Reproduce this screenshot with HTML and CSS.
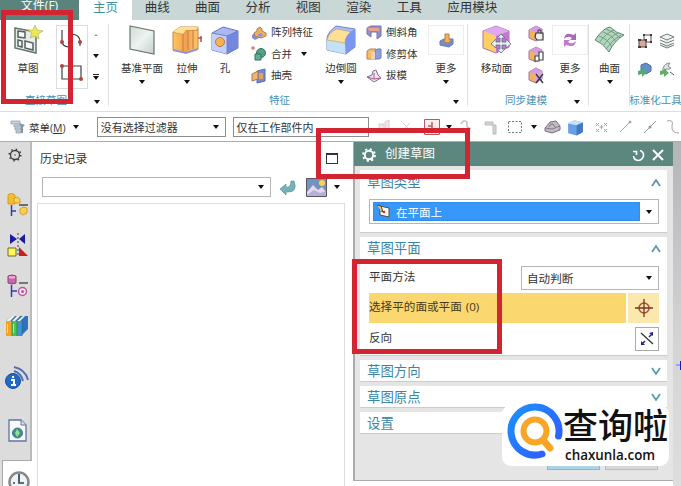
FILE: index.html
```html
<!DOCTYPE html>
<html lang="zh-CN">
<head>
<meta charset="utf-8">
<title>创建草图</title>
<link rel="stylesheet" href="styles.css">
</head>
<body>
<svg class="defs" width="0" height="0">
  <defs>
    <linearGradient id="glass" x1="0" y1="0" x2="1" y2="1"><stop offset="0" stop-color="#cfdad6"/><stop offset=".5" stop-color="#edf3f0"/><stop offset="1" stop-color="#c5d0cc"/></linearGradient>
    <linearGradient id="orange" x1="0" y1="0" x2="1" y2="0"><stop offset="0" stop-color="#fcc65e"/><stop offset=".5" stop-color="#f2a052"/><stop offset="1" stop-color="#fbc66b"/></linearGradient>
    <linearGradient id="logo" x1="0" y1="0" x2="1" y2="1"><stop offset="0" stop-color="#1c92ff"/><stop offset="1" stop-color="#3357ff"/></linearGradient>
    <symbol id="cube" viewBox="0 0 30 30"><path d="M2 8L13 2L28 6V23L17 29L2 25Z" fill="#a9b8f5" stroke="#6675b5"/><path d="M2 8L17 11V29L2 25Z" fill="#c2d1fc"/><path d="M17 11L28 6V23L17 29Z" fill="#7586df"/><path d="M2 8L17 11L28 6M17 11V29" fill="none" stroke="#7280c5"/></symbol>
    <symbol id="face" viewBox="0 0 18 18"><path d="M1 5L8 1L14 4V12L8 16L1 13Z" fill="#efb45d" stroke="#a577a4"/><path d="M1 5L8 1L14 4L8 7Z" fill="#d69ae7"/><path d="M8 7L14 4V12L8 16Z" fill="#d8a2e3"/></symbol>
  </defs>
</svg>
<div class="app">
  <nav class="tabs">
    <span class="tab file">文件(F)</span><span class="tab active">主页</span><span class="tab">曲线</span><span class="tab">曲面</span><span class="tab">分析</span><span class="tab">视图</span><span class="tab">渲染</span><span class="tab">工具</span><span class="tab modules">应用模块</span>
  </nav>

  <section class="ribbon">
    <div class="group sketch">
      <div class="tools">
        <div class="tool w-sketch">
          <svg width="30" height="30" viewBox="0 0 30 30"><path d="M2 3L23 7V28L2 23Z" fill="#e7edea" stroke="#66706c" stroke-width="1.5"/><path d="M5 6L12 7V13L5 12ZM5 15L9 16V22L5 21ZM12 16L20 18V25L12 23Z" fill="#fafafa" stroke="#56605c" stroke-width="1.5"/><path d="M22 0L24 5L30 6L25 9L26 14L22 11L17 13L19 8L15 5L20 5Z" fill="#ece85b" stroke="#b0b74d" stroke-width=".7"/></svg>
          <b>草图</b>
        </div>
        <div class="curves">
          <svg width="30" height="62" viewBox="0 0 30 62"><path d="M5 4V15Q5 21 13 21M13 8Q23 8 23 16V20M5 40H24V53H5Z" fill="none" stroke="#414141" stroke-width="1.2"/><g fill="#b7423d"><circle cx="5" cy="16" r="2"/><circle cx="23" cy="16" r="2"/><circle cx="5" cy="40" r="2"/><circle cx="24" cy="53" r="2"/></g></svg>
        </div>
        <div class="scroll"><i class="caret up"></i><i class="caret"></i><i class="caret bar"></i></div>
      </div>
      <div class="caption">直接草图<i class="caret corner"></i></div>
    </div>

    <div class="group feature">
      <div class="tools">
        <div class="tool w-datum"><svg width="30" height="30" viewBox="0 0 30 30"><path d="M3 1L27 6V29L3 24Z" fill="url(#glass)" stroke="#6a746f" stroke-width="1.2"/></svg><b>基准平面</b><i class="caret"></i></div>
        <div class="tool w-extrude"><svg width="32" height="30" viewBox="0 0 32 30"><path d="M2 7L9 2H27V24L15 28L2 25Z" fill="url(#orange)" stroke="#cc8443"/><path d="M2 7L12 9L15 5L27 5M12 9V27M17 6V25M22 5V24" fill="none" stroke="#c77b3d"/><path d="M2 7L9 2H27L25 5H15L12 9Z" fill="#ffe291"/><path d="M2 25L15 28L27 24" fill="none" stroke="#9098ce" stroke-width="2"/><path d="M27 13H31M30 11V17" stroke="#b85240" stroke-width="1.5"/></svg><b>拉伸</b><i class="caret"></i></div>
        <div class="tool w-hole"><svg width="30" height="30"><use href="#cube"/><circle cx="10" cy="17" r="4.5" fill="#f6b64f" stroke="#cc6f45"/></svg><b>孔</b></div>
        <div class="list w-list1">
          <div><svg width="16" height="16" viewBox="0 0 16 16"><path d="M1 10L5 7L8 9V13L4 15L1 13Z" fill="#7e91df"/><path d="M3 8L6 6V4L9 2L11 4V6L15 8V11L10 13L4 11Z" fill="#efb159" stroke="#b07855"/><path d="M7 9L10 8L12 10L10 12L7 11Z" fill="#8797dc"/></svg>阵列特征</div>
          <div><svg width="16" height="16" viewBox="0 0 16 16"><circle cx="10" cy="7" r="4.500" fill="#52a18a" stroke="#36715f"/><path d="M4 8H10V14H4Z" fill="#5fb194" stroke="#36715f"/><path d="M0 2H4M2 0V4" stroke="#dd5146"/></svg>合并<i class="caret inline"></i></div>
          <div><svg width="16" height="16" viewBox="0 0 16 16"><path d="M6 3L14 1V13L6 15Z" fill="#738bd2" stroke="#576baa"/><path d="M1 6L7 3V11L1 13Z" fill="#f3b55f" stroke="#ad7551"/><path d="M8 5H12V11H8Z" fill="#e2a15e"/></svg>抽壳</div>
        </div>
        <div class="tool w-edge"><svg width="32" height="30" viewBox="0 0 32 30"><path d="M2 13Q3 7 11 1L30 4V22L21 29L2 25Z" fill="#a9bef8" stroke="#7484bb"/><path d="M2 15H20V29L2 25Z" fill="#c5e1f8"/><path d="M2 15Q4 7 12 4L27 7Q20 11 20 18Z" fill="#ffdf95" stroke="#bda37a" stroke-width=".7"/><path d="M20 18Q20 9 30 4V22L21 29Z" fill="#7c95ee"/></svg><b>边倒圆</b><i class="caret"></i></div>
        <div class="list w-list2">
          <div><svg width="16" height="16" viewBox="0 0 16 16"><path d="M1 3L5 1H15V11L11 14V7H5V12L1 9Z" fill="#8b93d2" stroke="#7774a4"/><path d="M1 3H12L14 6H4Z" fill="#efa18a"/></svg>倒斜角</div>
          <div><svg width="16" height="16" viewBox="0 0 16 16"><path d="M1 5L4 3H10V13H1Z" fill="#f5bd67" stroke="#b77c63"/><path d="M9 5L11 3H15V12L13 13H9Z" fill="#8ea0df" stroke="#7480b8"/><path d="M5 6H9V13H5Z" fill="#f3d3ae"/></svg>修剪体</div>
          <div><svg width="16" height="16" viewBox="0 0 16 16"><path d="M1 9L6 7L7 3L10 2L12 7L15 10L8 14Z" fill="#eee4ed" stroke="#806f96"/><path d="M1 9L8 11L15 10M8 5V11" stroke="#a56289" fill="none"/></svg>拔模</div>
        </div>
        <div class="tool w-more"><span class="well"><svg width="15" height="15" viewBox="0 0 15 15"><path d="M1 8L5 6H14V11L10 14L1 12Z" fill="#6f8dd6" stroke="#667ab5"/><path d="M6 1H10V6L12 8L9 10L5 9L6 6Z" fill="#f0b357" stroke="#bd7b4d"/></svg></span><b>更多</b><i class="caret"></i></div>
      </div>
      <div class="caption">特征<i class="caret corner"></i></div>
    </div>

    <div class="group sync">
      <div class="tools">
        <div class="tool w-move"><svg width="32" height="30" viewBox="0 0 32 30"><path d="M2 6L15 1L28 6V22L15 28L2 23Z" fill="#ffcf65" stroke="#a775a7"/><path d="M2 6L15 1L28 6L15 11Z" fill="#e0a8ef"/><path d="M15 11L28 6V22L15 28Z" fill="#bc7bd0"/><path d="M20 9L24 13H21V17H25V14L30 19L25 23V20H21V24H24L20 28L16 24H19V20H15V23L10 19L15 14V17H19V13H16Z" fill="#e7ecf5" stroke="#626978" stroke-width=".8"/></svg><b>移动面</b></div>
        <div class="icons3">
          <svg width="18" height="18"><use href="#face"/><path d="M8 8H15V15H9L7 12Z" fill="#eee" stroke="#383838" stroke-width="1.2"/><path d="M10 8V5H13V9" fill="none" stroke="#383838"/></svg>
          <svg width="18" height="18"><use href="#face"/><path d="M7 10H11V15H7ZM11 6H15V14H11Z" fill="#fff" stroke="#474747" stroke-width="1.2"/></svg>
          <svg width="18" height="18"><use href="#face"/><path d="M8 7L15 16M15 7L8 16" stroke="#393942" stroke-width="1.4"/></svg>
        </div>
        <div class="tool w-more2"><span class="well"><svg width="16" height="16" viewBox="0 0 16 16"><path d="M2 7Q3 1 8 2L12 3L14 1V8H8L10 6Q6 3 2 7Z" fill="#a769b8"/><path d="M14 9Q13 15 8 14L4 13L2 15V8H8L6 10Q10 13 14 9Z" fill="#c777d0"/></svg></span><b>更多</b><i class="caret"></i></div>
      </div>
      <div class="caption">同步建模<i class="caret corner"></i></div>
    </div>

    <div class="group surface">
      <div class="tools"><div class="tool w-surface"><svg width="32" height="30" viewBox="0 0 32 30"><path d="M1 15Q9 3 16 2Q22 8 30 10Q20 16 15 27Q9 18 1 15Z" fill="#b2d5bd" stroke="#5d8a71"/><path d="M5 11Q14 14 18 22M9 7Q18 10 22 17M12 4Q21 7 26 13M5 18Q12 8 20 5M9 21Q16 11 24 8M12 24Q19 14 27 10" fill="none" stroke="#739d84"/></svg><b>曲面</b><i class="caret"></i></div></div>
    </div>

    <div class="group standard">
      <div class="tools">
        <div class="icons4">
          <svg width="16" height="16" viewBox="0 0 16 16"><path d="M2 7H9V14H2Z" fill="#d8aa99" stroke="#514b49"/><path d="M7 2H14V9H9V7H7Z" fill="none" stroke="#514b49"/><path d="M1 6H4V8H1ZM8 6H10V8H8ZM1 13H4V15H1ZM8 13H10V15H8ZM6 1H8V3H6ZM13 1H15V3H13ZM13 8H15V10H13Z" fill="#403a38"/></svg>
          <svg width="16" height="16" viewBox="0 0 16 16"><path d="M1 4L8 1L15 4L8 7ZM1 7L8 10L15 7M1 10L8 13L15 10M1 12L8 15L15 12" fill="#edf2ef" stroke="#6e7e7b"/></svg>
          <svg width="16" height="16" viewBox="0 0 16 16"><path d="M4 3L9 1L14 4V9L9 12L4 9Z" fill="#648fca" stroke="#4b6e9e"/><path d="M1 9L5 8V5L10 10L5 15V12L1 13Z" fill="#54a976"/></svg>
          <svg width="16" height="16" viewBox="0 0 16 16"><path d="M4 6Q6 1 11 1L9 4L12 6Q10 8 7 7L4 11Z" fill="#dae6df" stroke="#858b96"/><path d="M1 9L5 8V6L10 11L5 15V12L1 13Z" fill="#65ae67"/><path d="M11 10L15 13" stroke="#505970"/></svg>
        </div>
      </div>
      <div class="caption">标准化工具</div>
    </div>
  </section>

  <section class="selection">
    <svg class="menuicon" width="16" height="15" viewBox="0 0 16 15"><path d="M1 1H10V4H1ZM4 5H12V7H4ZM5 8H11V10H5ZM6 11H11V13H6Z" fill="#cdd5dc" stroke="#8796a3" stroke-width=".7"/><path d="M9 3L15 5L13 7V13H11V7Z" fill="#8197a7"/></svg>
    <span class="menu">菜单(<u>M</u>)</span><i class="caret"></i>
    <div class="combo filter"><span>没有选择过滤器</span><i class="caret"></i></div>
    <div class="combo scope">仅在工作部件内</div>
    <div class="strip">
      <svg class="i1" width="18" height="16"><path d="M3 5H8V12H3ZM9 3L13 1V10L9 13Z" fill="#eee6e7" stroke="#d8cccf"/></svg>
      <svg class="i2" width="18" height="16"><path d="M5 4L12 11M12 4L5 11" stroke="#d9c8ca"/></svg>
      <svg class="i3" width="16" height="16"><path d="M.5.5H15.5V15.5H.5Z" fill="#faeced" stroke="#b95761"/><path d="M8 3V13M4 7H8" stroke="#b55d67" stroke-width="1.5"/></svg>
      <i class="caret"></i>
      <svg class="i4" width="16" height="16"><path d="M3 5Q5 0 9 3V8M9 8L13 10" fill="none" stroke="#c3bbbc" stroke-width="1.4"/></svg>
      <svg class="i5" width="18" height="16"><path d="M2 3H10V6H2ZM10 6H13V15H10Z" fill="#d4d4d4" stroke="#bbb"/></svg>
      <svg class="i6" width="16" height="16"><path d="M1.500 2.500H14.500V13.500H1.500Z" fill="none" stroke="#777" stroke-dasharray="2 1.500"/></svg>
      <i class="caret"></i>
      <svg class="i7" width="17" height="16"><path d="M1 9L6 3L12 2L16 7V11L8 14L1 12Z" fill="#c1bbc5" stroke="#777080"/><path d="M1 9L8 10L16 7M5 8Q6 4 9 5L11 8" stroke="#857a88" fill="none"/></svg>
      <svg class="i8" width="17" height="17" viewBox="0 0 30 30"><path d="M2 8L13 2L28 6V23L17 29L2 25Z" fill="#659fe4"/><path d="M2 8L13 2L28 6L17 11Z" fill="#cae0f8"/><path d="M17 11L28 6V23L17 29Z" fill="#4477c6"/></svg>
      <svg class="i9" width="17" height="16"><path d="M3 4L6 7M6 4L3 7M11 4L14 7M14 4L11 7M3 10L6 13M6 10L3 13M11 10L14 13M14 10L11 13M8.500 6V10M6.500 8H10.500" stroke="#a7a7a7"/></svg>
      <svg class="i10" width="16" height="16"><path d="M2 13L12 3" stroke="#a5a5a5"/><circle cx="12" cy="3" r="1.500" fill="#aaa"/></svg>
      <svg class="i11" width="16" height="16"><path d="M2 14L14 2" stroke="#999"/><circle cx="8" cy="8" r="1.500" fill="#999"/></svg>
      <svg class="i12" width="16" height="16"><path d="M2 2Q9 0 7 7Q6 14 14 14" stroke="#a2a2a2" fill="none"/></svg>
    </div>
  </section>

  <main class="work">
    <aside class="rail">
      <svg class="gear" width="14" height="14" viewBox="0 0 14 14"><circle cx="7" cy="7" r="4.500" fill="none" stroke="#3b3b3b" stroke-width="1.300"/><circle cx="7" cy="7" r="5.800" fill="none" stroke="#3b3b3b" stroke-width="1.500" stroke-dasharray="1.500 3.055"/><circle cx="7" cy="7" r=".8" fill="#555"/></svg>
      <svg class="r2" width="22" height="24" viewBox="0 0 22 24"><path d="M1 2L4 0L8 2V11H1Z" fill="#f4bd30" stroke="#d49c26"/><path d="M7 5L10 4L13 6V10H7ZM13 16L16 14L20 15V20L16 22L13 20Z" fill="#fad04f" stroke="#d49c26"/><path d="M12 12H21" stroke="#484848" stroke-width="1.500"/><path d="M4.500 12V23M5 18H9" stroke="#3838b6" stroke-width="1.500"/></svg>
      <svg class="r3" width="22" height="24" viewBox="0 0 22 24"><path d="M3 1L10 6L3 11ZM18 1L12 6L18 11Z" fill="#1b1aa3"/><path d="M11 0V23" stroke="#444" stroke-dasharray="2 2"/><path d="M1 15H9V23H1Z" fill="#fff657" stroke="#756b29"/><path d="M12 14L21 23H12Z" fill="#c91e20"/></svg>
      <svg class="r4" width="22" height="24" viewBox="0 0 22 24"><path d="M1 2Q5 0 9 2V9Q5 11 1 9Z" fill="#c866a8" stroke="#8b456e"/><path d="M2 3Q5 4 8 3" stroke="#f5ace1" stroke-width="2" fill="none"/><path d="M12 9H21" stroke="#555" stroke-width="1.500"/><path d="M4.500 11V23M5 17H10" stroke="#3838b6" stroke-width="1.500"/><circle cx="15.500" cy="17.500" r="4" fill="#fbe4f2" stroke="#b8559b" stroke-width="1.500"/><circle cx="15.500" cy="17.500" r="1.500" fill="#b8559b"/></svg>
      <svg class="r5" width="24" height="22" viewBox="0 0 24 22"><path d="M1 6L7 1H23V14L16 21H1Z" fill="#2e72bd"/><path d="M1 6H7V21H1Z" fill="#f5a323"/><path d="M7 6H12V21H7Z" fill="#4bc54b"/><path d="M12 6H17V21H12Z" fill="#3e93dc"/><path d="M1 6L7 1H10L5 6ZM7 6L12 1H15L10 6ZM12 6L18 1H20L15 6Z" fill="#f8f3d7"/><path d="M2.500 9V18" stroke="#ffdf7d"/><path d="M8.500 9V18" stroke="#b6f28a"/><path d="M7 6V21M12 6V21M17 6V21" stroke="#33705e" stroke-width=".7"/></svg>
      <svg class="r6" width="25" height="25" viewBox="0 0 25 25"><circle cx="8" cy="16" r="7.500" fill="#2668c5" stroke="#1b4f9b"/><path d="M8 11V13M6 15H9V20M6 20H11" stroke="#fff" stroke-width="2" fill="none"/><path d="M9 6Q16 8 18 16M9 2Q20 4 23 15" fill="none" stroke="#5370ae" stroke-width="2"/></svg>
      <svg class="r7" width="20" height="23" viewBox="0 0 20 23"><path d="M1 1H13L18 6V22H1Z" fill="#f9fcff" stroke="#6072a8" stroke-width="1.300"/><path d="M13 1V6H18" fill="#d9ddf1" stroke="#6072a8"/><circle cx="9.500" cy="14" r="5" fill="#359482" stroke="#5269a5"/><path d="M9 10L12 14L9 18L7 14Z" fill="#97db97"/></svg>
      <div class="current"><svg width="22" height="22" viewBox="0 0 22 22"><circle cx="11" cy="11" r="9.500" fill="#edf4f8" stroke="#85898d" stroke-width="2.500"/><path d="M11 3V12H16M5 12H7" stroke="#344351" stroke-width="1.700" fill="none"/></svg></div>
    </aside>

    <section class="history">
      <header><span>历史记录</span><i class="maximize"></i></header>
      <div class="search">
        <div class="combo"><span></span><i class="caret"></i></div>
        <svg class="back" width="18" height="16" viewBox="0 0 18 16"><path d="M1 10L7 5V8Q12 9 12 2H15Q19 13 9 13H7V16Z" fill="#74b3b5" stroke="#5c9499" stroke-width=".7"/></svg>
        <svg class="picture" width="21" height="19" viewBox="0 0 21 19"><path d="M.5.5H20.500V18.500H.5Z" fill="#7193c2" stroke="#5c5360"/><path d="M1 14L7 7L12 12L16 9L20 14V18H1Z" fill="#e4d8ed"/><path d="M1 17L8 12L14 15L20 13V18H1Z" fill="#b5b0d5"/><circle cx="16" cy="5" r="3" fill="#f6d64c"/></svg>
        <i class="caret"></i>
      </div>
      <div class="records"></div>
    </section>

    <section class="dialog">
      <header>
        <svg width="16" height="16" viewBox="0 0 16 16"><circle cx="8" cy="8" r="4.200" fill="none" stroke="#fff" stroke-width="2"/><circle cx="8" cy="8" r="6" fill="none" stroke="#fff" stroke-width="1.800" stroke-dasharray="2.200 2.512"/></svg>
        <span>创建草图</span>
        <svg class="reset" width="13" height="13" viewBox="0 0 13 13"><path d="M1 2.500H4.500V6M8 1.500Q12 3 11.500 7Q10 11.500 6 11.500Q2 11 1.500 7" fill="none" stroke="#fff" stroke-width="1.700"/></svg>
        <svg width="12" height="12" viewBox="0 0 12 12"><path d="M1 1L11 11M11 1L1 11" stroke="#fff" stroke-width="2"/></svg>
      </header>
      <div class="content">
        <div class="panel type">
          <h3>草图类型<svg width="12" height="9"><path d="M2 8L6 2L10 8" fill="none" stroke="#5b93a8" stroke-width="1.800"/></svg></h3>
          <div class="combo plane"><div class="selected"><svg width="14" height="15" viewBox="0 0 14 15"><path d="M3 2L12 4V13L3 11Z" fill="#fff8ed" stroke="#504d55"/><path d="M0 1L4 2L6 8L4 7" fill="#e9c064" stroke="#5b4d33"/><circle cx="7" cy="8" r="1.200" fill="#a3382f"/></svg>在平面上</div><i class="caret"></i></div>
        </div>
        <div class="panel planes">
          <h3>草图平面<svg width="12" height="9"><path d="M2 8L6 2L10 8" fill="none" stroke="#5b9ba8" stroke-width="1.800"/></svg></h3>
          <div class="row"><span>平面方法</span><div class="combo method"><span>自动判断</span><i class="caret"></i></div></div>
          <div class="row pick"><span>选择平的面或平面 (0)</span><div class="target"><svg width="18" height="18"><circle cx="9" cy="9" r="5" fill="none" stroke="#b54b32" stroke-width="1.500"/><path d="M9 0V18M0 9H18" stroke="#70372a" stroke-width="1.300"/></svg></div></div>
          <div class="row"><span>反向</span><div class="reverse"><svg width="16" height="16"><path d="M2 2L14 13" stroke="#343434" stroke-width="1.300"/><path d="M3 13L6 10M10 6L13 3" stroke="#22228b" stroke-width="1.500"/><path d="M2 14V10L6 14ZM14 1V5L10 2Z" fill="#22228b"/></svg></div></div>
        </div>
        <div class="panel folded"><h3>草图方向<svg width="12" height="9"><path d="M2 1L6 7L10 1" fill="none" stroke="#5b9ba8" stroke-width="1.800"/></svg></h3></div>
        <div class="panel folded"><h3>草图原点<svg width="12" height="9"><path d="M2 1L6 7L10 1" fill="none" stroke="#5b9ba8" stroke-width="1.800"/></svg></h3></div>
        <div class="panel folded"><h3>设置</h3></div>
        <div class="actions"><span class="ok"></span><span class="cancel"></span></div>
      </div>
    </section>
    <div class="canvas"><svg width="8" height="14"><path d="M3 7H8" stroke="#6e6ee5"/><path d="M7 3H8V12H7Z" fill="#1919c4"/></svg></div>
  </main>

  <div class="mark mark-sketch"></div>
  <div class="mark mark-title"></div>
  <div class="mark mark-plane"></div>

  <div class="brand">
    <svg width="56" height="56" viewBox="0 0 56 56"><path d="M51.500 33A24 24 0 1 0 35 51" fill="none" stroke="url(#logo)" stroke-width="7" stroke-linecap="round"/><circle cx="28" cy="28" r="11.500" fill="none" stroke="#f9a526" stroke-width="6"/><path d="M36 37L43 45" stroke="#f9a526" stroke-width="7" stroke-linecap="round"/></svg>
    <div class="brandtext"><strong>查询啦</strong><em>chaxunla.com</em></div>
  </div>
</div>
</body>
</html>
```
FILE: styles.css
```css
* { box-sizing: border-box; }
body { margin: 0; overflow: hidden; font-family: "Open Sans", "Noto Sans CJK SC", sans-serif; font-size: 10.5px; color: #333; }
svg { display: block; flex: none; }
.defs { position: absolute; }
.app { position: relative; width: 681px; height: 486px; overflow: hidden; background: #fff; display: flex; flex-direction: column; }

.caret { flex: none; width: 0; height: 0; border: solid transparent; border-width: 4px 3px 0; border-top-color: #111; }
.caret.up { border-width: 0 2px 2px; border-bottom-color: #999; }
.combo { display: flex; align-items: center; justify-content: space-between; border: 1px solid #b5b5b5; background: #fff; white-space: nowrap; }

.tabs { flex: none; display: flex; height: 20px; background: #c9d8d6; font-size: 12.5px; }
.tab { width: 50.4px; line-height: 15px; height: 20px; text-align: center; white-space: nowrap; }
.tab.file { width: 79px; background: #5a847b; color: #fff; line-height: 11px; font-size: 12px; }
.tab.active { width: 53px; background: #fff; color: #3d93a5; }
.tab.modules { width: 64px; margin-left: 6px; }

.ribbon { flex: none; display: flex; height: 92px; border-bottom: 1px solid #ddd; }
.group { display: flex; flex-direction: column; margin: 4px 0 5px; border-right: 1px solid #e0e0e0; overflow: hidden; flex: none; }
.sketch { width: 109px; }
.feature { width: 359px; }
.sync { width: 121px; }
.surface { width: 41px; }
.standard { width: 51px; border: 0; }
.tools { display: flex; height: 70px; flex: none; }
.caption { display: flex; align-items: center; justify-content: center; position: relative; height: 13px; line-height: 13px; color: #4591b5; white-space: nowrap; }
.feature .caption { padding-right: 17px; }
.sync .caption { padding-right: 4px; }
.sketch .caption { padding-right: 16px; }
.caption .corner { position: absolute; right: 8px; top: 6px; }
.tool { display: flex; flex-direction: column; align-items: center; flex: none; padding-top: 1px; }
.tool b { font-weight: normal; line-height: 16px; height: 16px; margin-top: 5px; white-space: nowrap; }
.tool > svg { height: 30px; }
.tool .caret { margin-top: 4px; }
.w-sketch { width: 56px; }
.w-datum { width: 66px; }
.w-extrude { width: 24px; }
.w-hole { width: 52px; }
.w-edge { width: 50px; margin-left: -2px; }
.w-more, .w-more2 { width: 36px; }
.w-move { width: 57px; }
.w-surface { width: 41px; }
.well { display: flex; align-items: center; justify-content: center; width: 36px; height: 30px; border: 1px solid #eee; flex: none; }
.curves { width: 32px; height: 64px; border: 1px solid #ddd; margin-top: 1px; }
.scroll { width: 20px; height: 46px; display: flex; flex-direction: column; align-items: center; justify-content: space-between; margin: 10px 0 0 -2px; }
.bar { position: relative; }
.bar::before { content: ""; position: absolute; left: -3px; top: -6px; width: 6px; height: 1px; background: #222; }
.list { display: flex; flex-direction: column; flex: none; margin-top: -2px; }
.list div { display: flex; align-items: center; height: 21.5px; gap: 4px; white-space: nowrap; line-height: 17px; }
.w-list1 { width: 67px; }
.w-list2 { width: 62px; }
.inline { margin-left: 5px; }
.icons3 { width: 28px; display: flex; flex-direction: column; gap: 3px; padding: 1px 0 0 3px; }
.w-more2 { margin-left: -5px; }
.sync .w-more2 { margin-left: -5px; }
.sync .icons3 { width: 33px; }
.icons4 { display: grid; grid-template-columns: 16px 16px; gap: 13px 6px; padding: 9px 0 0 7px; align-content: start; }

.selection { flex: none; display: flex; align-items: center; height: 30px; border-bottom: 1px solid #a4b0ae; padding: 1px 0 0 10px; font-size: 11px; }
.menu { margin: 0 7px 0 3px; width: 37px; white-space: nowrap; font-size: 10.5px; }
.selection .filter { width: 131px; height: 20px; margin-left: 18px; padding: 0 6px 0 3px; border-color: #8d8d8d; }
.selection .scope { width: 137px; height: 20px; margin-left: 7px; padding-left: 2px; border-color: #8d8d8d; }
.strip { display: flex; align-items: center; padding-left: 7px; flex: none; }
.i2 { margin-left: 4px; } .i3 { margin: 0 6px 0 8px; } .i4 { margin-left: 6px; }
.i5 { margin-left: 9px; } .i6 { margin: 0 8px 0 6px; } .i7 { margin-left: 7px; }
.i8 { margin-left: 6px; } .i9 { margin-left: 9px; } .i10 { margin-left: 8px; }
.i11 { margin-left: 8px; } .i12 { margin-left: 7px; }

.work { display: flex; flex: 1; min-height: 0; }
.rail { width: 32px; flex: none; background: #dcdcdc; border-right: 2px solid #bababa; display: flex; flex-direction: column; }
.gear { margin: 6px 0 0 8px; }
.r2 { margin: 31px 0 0 7px; } .r3 { margin: 16px 0 0 7px; } .r4 { margin: 17px 0 0 7px; }
.r5 { margin: 17px 0 0 5px; } .r6 { margin: 28px 0 0 5px; } .r7 { margin: 29px 0 0 8px; }
.current { margin: 18px -2px 0 2px; padding: 10px 0 0 5px; height: 30px; background: #fff; border: 1px solid #aaa; border-right: 0; overflow: hidden; flex: none; }

.history { width: 321px; flex: none; display: flex; flex-direction: column; }
.history header { display: flex; justify-content: space-between; align-items: center; height: 30px; padding: 0 15px 0 8px; font-size: 11.8px; }
.maximize { width: 12px; height: 11px; border: 1px solid #333; border-top-width: 2px; margin-top: 2px; }
.search { display: flex; align-items: center; padding: 5px 0 0 10px; }
.search .combo { width: 229px; height: 20px; padding-right: 6px; }
.back { margin-left: 8px; }
.picture { margin: 0 7px 0 9px; }
.records { margin: 6px 8px 0 5px; flex: 1; border: 1px solid #ddd; border-bottom: 0; }

.dialog { width: 320px; height: 339px; flex: none; background: #e5e5e5; border-left: 2px solid #aaa; border-bottom: 1px solid #aaa; }
.dialog header { display: flex; align-items: center; height: 24px; background: #5b877e; color: #fff; font-size: 12.5px; padding: 2px 9px 0 7px; margin-left: -1px; }
.dialog header span { margin-left: 8px; line-height: 16px; margin-top: -2px; }
.reset { margin: 0 7px 0 auto; }
.content { padding: 4px 6px 0 5px; }
.panel { background: #fff; margin-bottom: 4px; padding-left: 7px; padding-right: 8px; border-bottom: 1px solid #ccc; }
.panel h3 { display: flex; align-items: center; justify-content: space-between; margin: 0 -3px 0 0; height: 23px; font-size: 13.4px; font-weight: normal; color: #3986a6; line-height: 23px; }
.type { height: 63px; }
.type h3 { height: 25px; line-height: 25px; }
.planes { height: 119px; }
.folded { height: 22px; }
.plane { height: 25px; margin: 4px 0 0 2px; padding: 2px 6px 2px 3px; }
.selected { display: flex; align-items: center; gap: 5px; width: 267px; height: 19px; padding-left: 3px; background: #3797fb; color: #fff; font-size: 11.5px; border: 1px dotted #5577a3; }
.row { display: flex; align-items: center; justify-content: space-between; height: 25px; margin-left: 2px; font-size: 11.6px; }
.planes .row:nth-child(2) { margin-top: 5px; }
.method { width: 138px; height: 24px; padding: 0 6px 0 5px; }
.row > span { line-height: 18px; margin-top: -2px; }
.pick { height: 30px; margin-top: 3px; margin-bottom: 3px; background: #fbd770; color: #45391d; word-spacing: 1px; }
.target { width: 33px; height: 30px; border-left: 2px solid #fff; background: #fbe8ac; display: flex; align-items: center; justify-content: center; }
.reverse { width: 24px; height: 24px; border: 1px solid #aaa; display: flex; align-items: center; justify-content: center; }
.actions { display: flex; justify-content: flex-end; gap: 5px; padding: 12px 9px 0 0; }
.actions span { height: 20px; width: 53px; background: #d7d7d7; border: 1px solid #bdbdbd; }
.actions .ok { background: #add4e6; border-color: #8db4c8; }
.canvas { flex: 1; background: linear-gradient(#b5b5b8, #d5d5d6 60%, #dedede); padding-top: 216px; }

.mark { position: absolute; border: 5px solid #d32531; }
.mark-sketch { left: 1px; top: 10px; width: 72px; height: 94px; }
.mark-title { left: 316px; top: 128px; width: 154px; height: 51px; }
.mark-plane { left: 352px; top: 259px; width: 150px; height: 95px; }

.brand { position: absolute; left: 502px; top: 405px; width: 167px; height: 61px; border-radius: 9px; background: #fff; color: #111; display: flex; padding-left: 5px; }
.brand svg { margin-top: -2px; }
.brandtext { display: flex; flex-direction: column; white-space: nowrap; }
.brandtext strong { font-size: 35px; line-height: 41px; font-weight: 500; }
.brandtext em { font-style: normal; font-weight: 600; font-size: 13.4px; line-height: 16px; margin: 1px 0 0 2px; }
```
